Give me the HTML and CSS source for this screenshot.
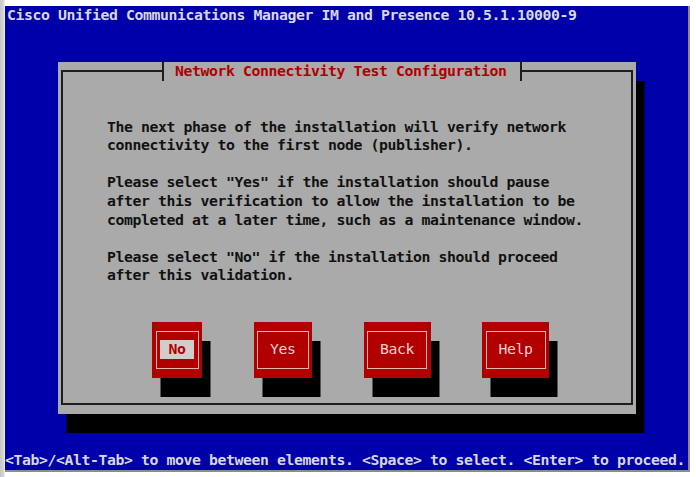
FILE: index.html
```html
<!DOCTYPE html>
<html lang="en">
<head>
    <meta charset="UTF-8">
    <title>Network Connectivity Test Configuration</title>
    <link rel="stylesheet" href="styles.css">
</head>
<body>
    <div class="shot">
        <div class="screen">
            <div class="top-line">Cisco Unified Communications Manager IM and Presence 10.5.1.10000-9</div>

            <div class="dialog">
                <div class="frame">
                    <div class="title">Network Connectivity Test Configuration</div>

                    <div class="message">
                        <p>The next phase of the installation will verify network<br>connectivity to the first node (publisher).</p>
                        <p>Please select "Yes" if the installation should pause<br>after this verification to allow the installation to be<br>completed at a later time, such as a maintenance window.</p>
                        <p>Please select "No" if the installation should proceed<br>after this validation.</p>
                    </div>

                    <div class="buttons">
                        <div class="btn"><div class="btn-inner"><span class="label focus">No</span></div></div>
                        <div class="btn"><div class="btn-inner"><span class="label">Yes</span></div></div>
                        <div class="btn"><div class="btn-inner"><span class="label">Back</span></div></div>
                        <div class="btn"><div class="btn-inner"><span class="label">Help</span></div></div>
                    </div>
                </div>
            </div>

            <div class="help-line">&lt;Tab&gt;/&lt;Alt-Tab&gt; to move between elements. &lt;Space&gt; to select. &lt;Enter&gt; to proceed.</div>
        </div>
    </div>
</body>
</html>
```

FILE: styles.css
```css
body {
    margin: 0;
    background: #fff;
}

.shot {
    width: 696px;
    height: 477px;
    box-sizing: border-box;
    padding: 6px 0 0 5px;
    background: linear-gradient(to right, #c6c6c6 0, #d8d8d8 4px, #fff 5px);
}

.screen {
    width: 683px;
    height: 464px;
    background: #0000aa;
    border-right: 2px solid #8c8c8c;
    border-bottom: 2px solid #8c8c8c;
    display: flex;
    flex-direction: column;
    font-family: "DejaVu Sans Mono", "Liberation Mono", monospace;
    font-weight: bold;
    font-size: 14.8px;
    letter-spacing: -0.41px;
    line-height: 18.6px;
    white-space: nowrap;
}

.top-line {
    height: 18.6px;
    padding-left: 2px;
    color: #d8d8e0;
}

.dialog {
    margin: 37.4px 0 0 53px;
    width: 578px;
    height: 352px;
    box-sizing: border-box;
    padding: 8px 3px 9px 3px;
    background: #aaaaaa;
    box-shadow: 8.5px 19px 0 #000;
}

.frame {
    height: 100%;
    box-sizing: border-box;
    border: 2px solid #1e1e1e;
    display: flex;
    flex-direction: column;
    align-items: flex-start;
}

.title {
    margin: -10px 0 0 99px;
    height: 18.6px;
    padding: 0 14px 0 11px;
    background: #aaaaaa;
    border-left: 2px solid #1e1e1e;
    border-right: 2px solid #1e1e1e;
    color: #b00000;
}

.message {
    margin-top: 37px;
    padding-left: 44px;
    color: #111;
}

.message p {
    margin: 0 0 18.6px 0;
}

.message p:last-child {
    margin-bottom: 0;
}

.buttons {
    display: flex;
    gap: 51.5px;
    margin: 37.2px 0 0 89px;
}

.btn {
    height: 55.8px;
    box-sizing: border-box;
    padding: 8.5px 3.5px 9px;
    background: #b00000;
    box-shadow: 8.5px 19px 0 #000;
}

.btn-inner {
    height: 100%;
    box-sizing: border-box;
    border: 1.5px solid #e2b4b4;
    padding: 0 3.5px;
    display: flex;
    align-items: center;
}

.label {
    height: 18.6px;
    padding: 0 8.5px;
    color: #e8d0d0;
    font-weight: normal;
}

.label.focus {
    background: #d4cccc;
    color: #b00000;
    font-weight: bold;
}

.help-line {
    margin-top: auto;
    height: 18.6px;
    color: #d8d8e0;
}
```
